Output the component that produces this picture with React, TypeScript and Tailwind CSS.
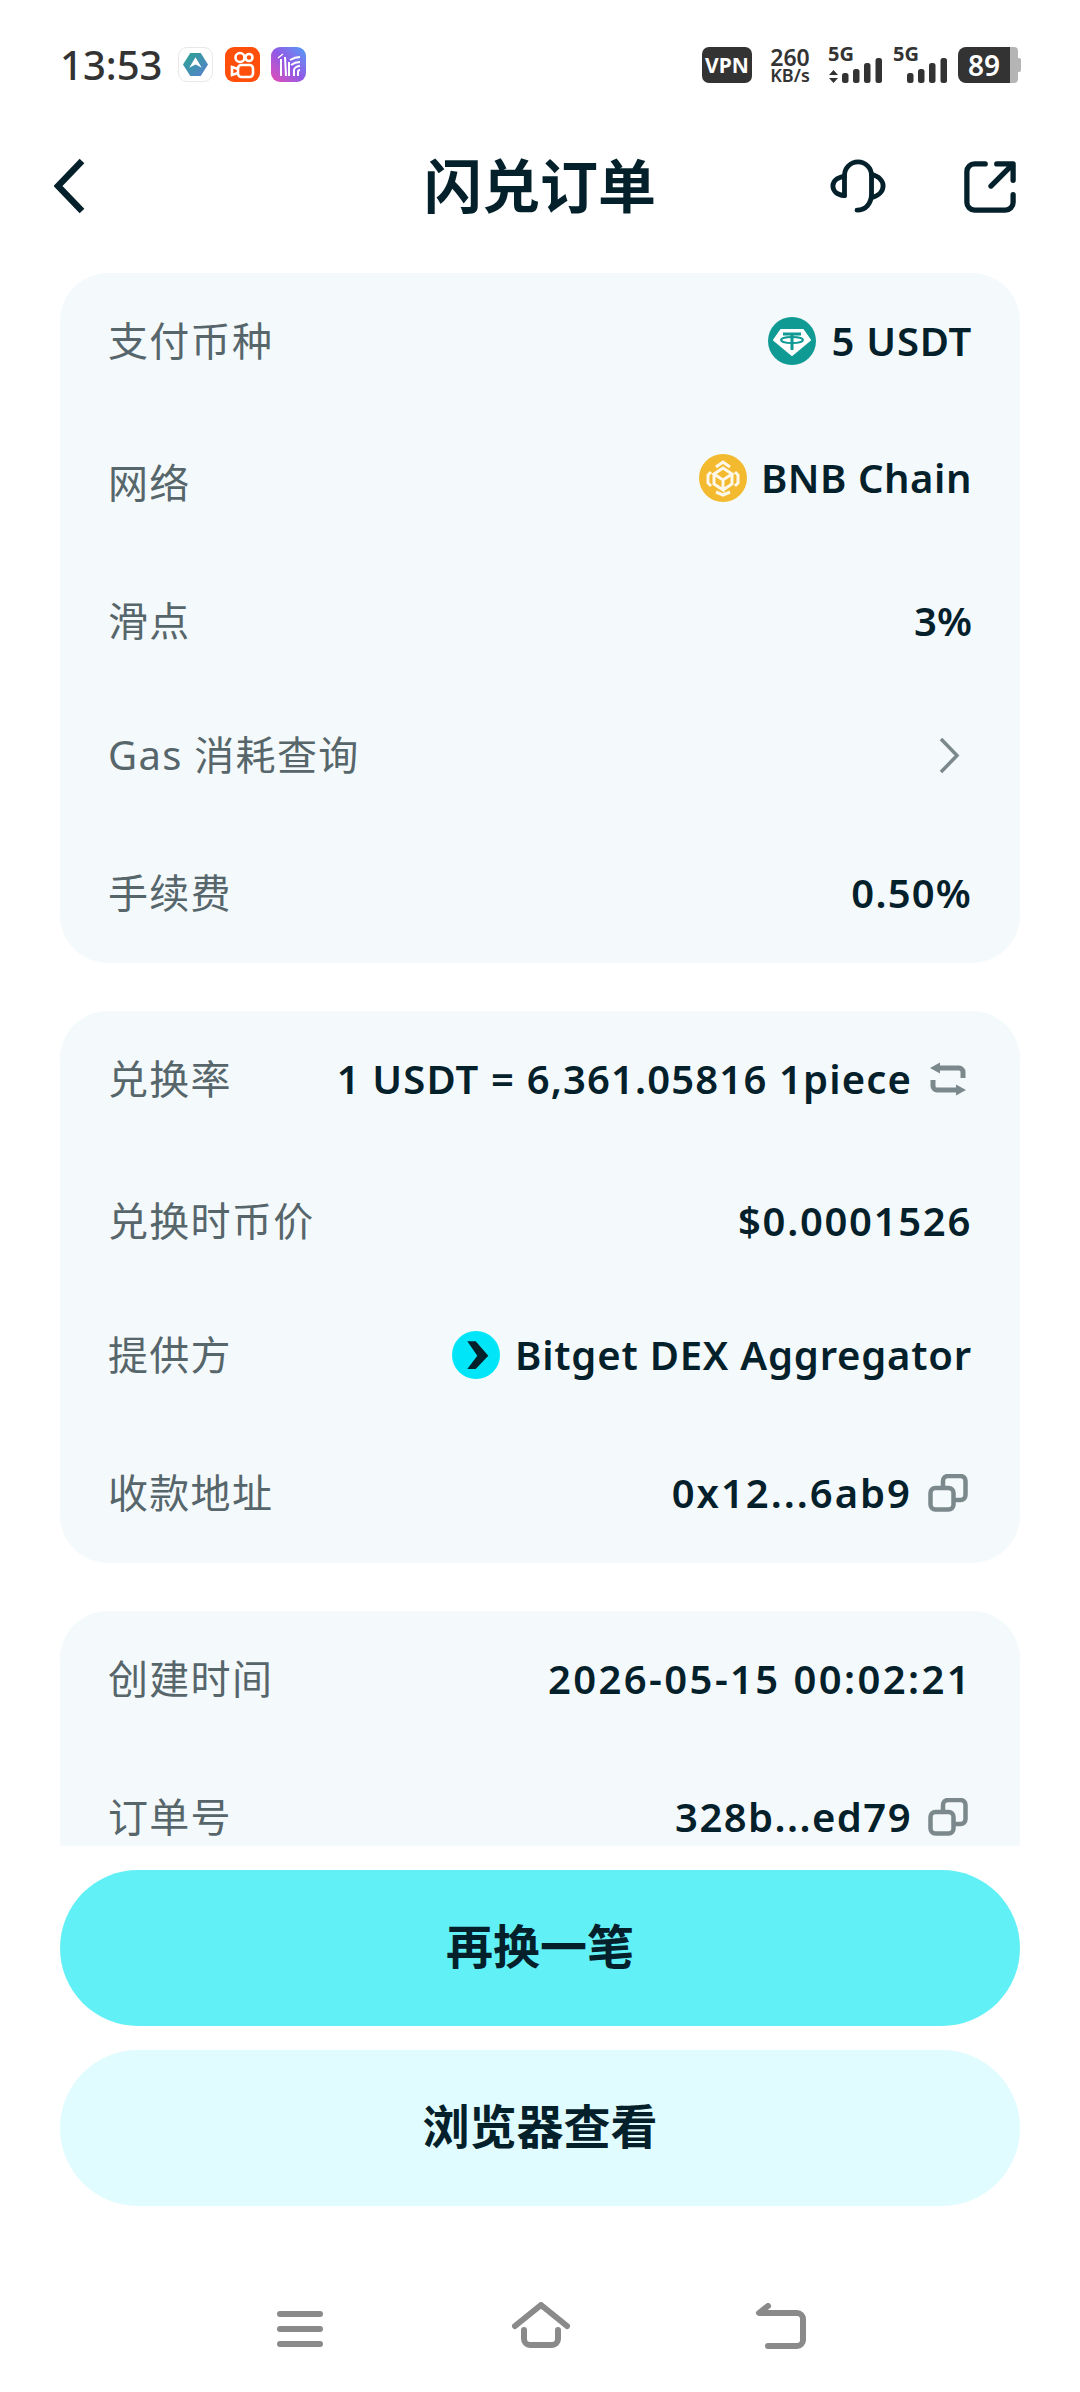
const latin = "font-['Noto_Sans','Noto_Sans_CJK_SC',sans-serif]";

function Row({ label, mt, labelClass = "", children }: { label: string; mt: string; labelClass?: string; children: React.ReactNode }) {
  return (
    <div className={`flex h-[60px] items-center justify-between ${mt}`}>
      <span className={`text-[40px] leading-none tracking-[1.3px] text-[#56666b] ${labelClass}`}>{label}</span>
      <div className="flex items-center text-[40px] font-semibold leading-none text-[#04212b]">{children}</div>
    </div>
  );
}

function CopyIcon() {
  return (
    <svg width="40" height="38" viewBox="0 0 40 38" fill="none" stroke="#7b888c" strokeWidth="4.5" className="ml-[16px] mr-[4px]">
      <rect x="2.500" y="14" width="23" height="21.500" rx="5" />
      <path d="M15 14V7a5 5 0 0 1 5-5h12.500a5 5 0 0 1 5 5v14a5 5 0 0 1-5 5H26" />
    </svg>
  );
}

function UsdtIcon() {
  return (
    <svg width="48" height="48" viewBox="0 0 48 48" className="mr-[16px]">
      <circle cx="24" cy="24" r="24" fill="#0f9a93" />
      <path d="M13 13h22l7 10-18 15L6 23z" fill="#fff" strokeLinejoin="round" stroke="#fff" strokeWidth="2" />
      <path d="M15 17h18M24 17v16" stroke="#0f9a93" strokeWidth="3" />
      <ellipse cx="24" cy="23" rx="11" ry="3" fill="none" stroke="#0f9a93" strokeWidth="2" />
    </svg>
  );
}

function BnbIcon() {
  return (
    <svg width="48" height="48" viewBox="0 0 48 48" className="mr-[14px]">
      <circle cx="24" cy="24" r="24" fill="#f3ba2f" />
      <g fill="none" stroke="#fff" strokeWidth="3" strokeOpacity="0.9">
        <path d="M17 14l7-5 7 5M36 19l3 3v8l-3 3M12 19l-3 3v8l3 3M17 39l7 3 7-3" transform="translate(0 -1)" />
        <path d="M15 20l9-6 9 6-9 6zM15 20v10l9 6V26M33 20v10l-9 6" />
      </g>
    </svg>
  );
}

function BitgetIcon() {
  return (
    <svg width="48" height="48" viewBox="0 0 48 48" className="mr-[15px]">
      <circle cx="24" cy="24" r="24" fill="#00e6f8" />
      <path d="M15.300 10.300h8.400l12.600 14.400-12.600 13.300h-8.400l10-13.300z" fill="#04212b" />
    </svg>
  );
}

function Bars({ arrows }: { arrows?: boolean }) {
  return (
    <svg width="54" height="36" viewBox="0 0 54 36" fill="#333333">
      {arrows && <path d="M1 28l4.500-5 4.500 5zM1 31l4.500 5 4.500-5z" />}
      <rect x="14" y="26" width="6.500" height="10" rx="2.500" />
      <rect x="25" y="22" width="6.500" height="14" rx="2.500" />
      <rect x="36" y="16" width="6.500" height="20" rx="2.500" />
      <rect x="47.500" y="11" width="6.500" height="25" rx="2.500" />
    </svg>
  );
}

function StatusBar() {
  return (
    <div className="flex h-[130px] items-start justify-between pl-[60px] pr-[59px] pt-[47px]">
      <div className="flex items-center">
        <span className="w-[113px] text-[40px] font-medium leading-[34px] text-[#333333]">13:53</span>
        <div className="ml-[5px] flex h-[35px] w-[35px] items-center justify-center rounded-[9px] border border-[#e8e8e8] bg-white">
          <svg width="25" height="25" viewBox="0 0 24 24">
            <defs>
              <linearGradient id="hex" x1="0" y1="0" x2="1" y2="1">
                <stop offset="0" stopColor="#27a58f" />
                <stop offset="1" stopColor="#5a7fd0" />
              </linearGradient>
            </defs>
            <path d="M7 1h10l7 11-7 11H7L0 12z" fill="url(#hex)" />
            <path d="M12 5l6 10-6-3-6 3z" fill="#fff" />
          </svg>
        </div>
        <div className="ml-[12px] flex h-[35px] w-[35px] items-center justify-center rounded-[9px] bg-[#ff4f0a]">
          <svg width="28" height="28" viewBox="0 0 28 28" fill="none" stroke="#fff" strokeWidth="2.600">
            <circle cx="11" cy="6.500" r="4.500" />
            <circle cx="20" cy="6.500" r="3.500" />
            <rect x="9" y="14" width="15" height="12" rx="3.500" />
            <path d="M9 18l-6-2v8l6-2" />
          </svg>
        </div>
        <div className="ml-[11px] flex h-[35px] w-[35px] items-center justify-center rounded-[9px] bg-gradient-to-bl from-[#3f9cf5] via-[#8f58e6] to-[#e546b4]">
          <svg width="28" height="28" viewBox="0 0 28 28" fill="none" stroke="#fff" strokeWidth="2">
            <path d="M6 8v17M10 6l1 19M14 11v14M15 9c5-3 8-3 10-3M16 14c4-3 7-3 9-3M19 25v-6c0-2 3-4 6-4M23 25v-4c0-1 1-2 2-2" />
            <path d="M3 7l5-4" strokeWidth="1.500" />
          </svg>
        </div>
      </div>
      <div className="flex h-[36px] items-stretch">
        <div className="flex w-[50px] items-center justify-center rounded-[7px] bg-[#333333] text-[21px] font-bold leading-none text-white">VPN</div>
        <div className="ml-[17px] flex w-[42px] flex-col items-center text-[#333333]">
          <span className="text-[23px] font-semibold leading-[20px]">260</span>
          <span className="whitespace-nowrap text-[18px] font-semibold leading-[16px]">KB/s</span>
        </div>
        <div className="relative ml-[17px] w-[54px]">
          <span className="absolute left-0 top-[-3px] text-[20px] font-bold leading-[20px] text-[#333333]">5G</span>
          <Bars arrows />
        </div>
        <div className="relative ml-[11px] w-[54px]">
          <span className="absolute left-0 top-[-3px] text-[20px] font-bold leading-[20px] text-[#333333]">5G</span>
          <Bars />
        </div>
        <div className="ml-[11px] flex items-center">
          <div className="flex h-[36px] w-[52px] items-center justify-center rounded-l-[8px] bg-[#333333] text-[28px] font-semibold leading-none text-white">89</div>
          <div className="h-[36px] w-[8px] rounded-r-[4px] bg-[#b5b5b5]" />
          <div className="h-[14px] w-[3px] rounded-r-[2px] bg-[#b5b5b5]" />
        </div>
      </div>
    </div>
  );
}

function Header() {
  return (
    <div className="relative flex h-[113px] items-center justify-center px-[55px]">
      <svg width="32" height="56" viewBox="0 0 32 56" fill="none" stroke="#04212b" strokeWidth="6.500" className="absolute left-[54px] top-[28px]">
        <path d="M28 3L4 28l24 25" />
      </svg>
      <span className="mb-[2px] text-[58px] font-semibold leading-none text-[#04212b]">闪兑订单</span>
      <svg width="56" height="56" viewBox="0 0 58 58" fill="none" stroke="#04212b" strokeWidth="5" strokeLinecap="round" className="absolute left-[830px] top-[29px]">
        <path d="M15 38V17a14 14 0 0 1 28 0v19c0 10-6 17-15 17" />
        <path d="M15 18C7 19 3 23 3 28s4 9 12 10" />
        <path d="M43 16c8 2 12 7 12 12s-4 10-12 12" />
      </svg>
      <svg width="52" height="52" viewBox="0 0 54 54" fill="none" stroke="#04212b" strokeWidth="5.500" strokeLinecap="round" className="absolute left-[964px] top-[31px]">
        <path d="M22 3H11a8 8 0 0 0-8 8v32a8 8 0 0 0 8 8h32a8 8 0 0 0 8-8V35" />
        <path d="M28 26L50 4M34 3h17v17" strokeLinejoin="round" />
      </svg>
    </div>
  );
}

export default function App() {
  return (
    <div className={`flex h-[2392px] w-[1080px] flex-col overflow-hidden bg-white ${latin}`}>
      <StatusBar />
      <Header />
      <div className="mt-[30px] flex h-[1573px] flex-col gap-[48px] overflow-hidden px-[60px]">
        <div className="h-[690px] shrink-0 rounded-[48px] bg-[#f4f9fb] px-[48px] pt-[38px]">
          <Row label="支付币种" mt="">
            <UsdtIcon />
            <span className="tracking-[0.75px]">5 USDT</span>
          </Row>
          <Row label="网络" mt="mt-[77px]" labelClass="mt-[9px]">
            <BnbIcon />
            <span className="tracking-[0.55px]">BNB Chain</span>
          </Row>
          <Row label="滑点" mt="mt-[83px]"><span>3%</span></Row>
          <Row label="Gas 消耗查询" mt="mt-[74px]">
            <svg width="21" height="37" viewBox="0 0 21 37" fill="none" stroke="#7b888c" strokeWidth="3.500" className="mr-[12px]">
              <path d="M2 2l16 16.500L2 35" />
            </svg>
          </Row>
          <Row label="手续费" mt="mt-[78px]"><span className="tracking-[1.2px]">0.50%</span></Row>
        </div>
        <div className="h-[552px] shrink-0 rounded-[48px] bg-[#f4f9fb] px-[48px] pt-[38px]">
          <Row label="兑换率" mt="">
            <span className="tracking-[1.15px]">1 USDT = 6,361.05816 1piece</span>
            <svg width="36" height="34" viewBox="0 0 36 34" fill="none" stroke="#7b888c" strokeWidth="5" className="ml-[18px] mr-[6px]">
              <path d="M8 6h21a4 4 0 0 1 4 4v6M3 18v6a4 4 0 0 0 4 4h21" />
              <path d="M0 6l10-5.500v11zM36 28l-10-5.500v11z" fill="#7b888c" stroke="none" />
            </svg>
          </Row>
          <Row label="兑换时币价" mt="mt-[82px]"><span className="tracking-[1.7px]">$0.0001526</span></Row>
          <Row label="提供方" mt="mt-[74px]">
            <BitgetIcon />
            <span className="tracking-[0.8px]">Bitget DEX Aggregator</span>
          </Row>
          <Row label="收款地址" mt="mt-[78px]">
            <span className="tracking-[2px]">0x12...6ab9</span>
            <CopyIcon />
          </Row>
        </div>
        <div className="h-[400px] shrink-0 rounded-[48px] bg-[#f4f9fb] px-[48px] pt-[38px]">
          <Row label="创建时间" mt=""><span className="tracking-[2.4px]">2026-05-15 00:02:21</span></Row>
          <Row label="订单号" mt="mt-[78px]">
            <span className="tracking-[1.45px]">328b...ed79</span>
            <CopyIcon />
          </Row>
        </div>
      </div>
      <div className="mt-[24px] flex flex-col gap-[24px] px-[60px]">
        <div className="flex h-[156px] items-center justify-center rounded-full bg-[#62f0f7] pb-[3px] text-[47px] font-semibold text-[#04212b]">再换一笔</div>
        <div className="flex h-[156px] items-center justify-center rounded-full bg-[#e0fcff] pb-[3px] text-[47px] font-semibold text-[#04212b]">浏览器查看</div>
      </div>
      <div className="relative flex-1">
        <svg width="50" height="40" viewBox="0 0 50 40" fill="none" stroke="#8a8a8a" strokeWidth="6" strokeLinecap="round" className="absolute left-[275px] top-[103px]">
          <path d="M5 5h40M5 20h40M5 35h40" />
        </svg>
        <svg width="62" height="46" viewBox="0 0 62 46" fill="none" stroke="#8a8a8a" strokeWidth="6" strokeLinecap="round" strokeLinejoin="round" className="absolute left-[510px] top-[96px]">
          <path d="M5 24L31 3l26 21" />
          <path d="M14 28v9a6 6 0 0 0 6 6h22a6 6 0 0 0 6-6v-9" />
        </svg>
        <svg width="54" height="46" viewBox="0 0 54 46" fill="none" stroke="#8a8a8a" strokeWidth="6" strokeLinecap="round" strokeLinejoin="round" className="absolute left-[754px] top-[97px]">
          <path d="M14 3L5 10h38a6 6 0 0 1 6 6v21a6 6 0 0 1-6 6H14" />
        </svg>
      </div>
    </div>
  );
}
